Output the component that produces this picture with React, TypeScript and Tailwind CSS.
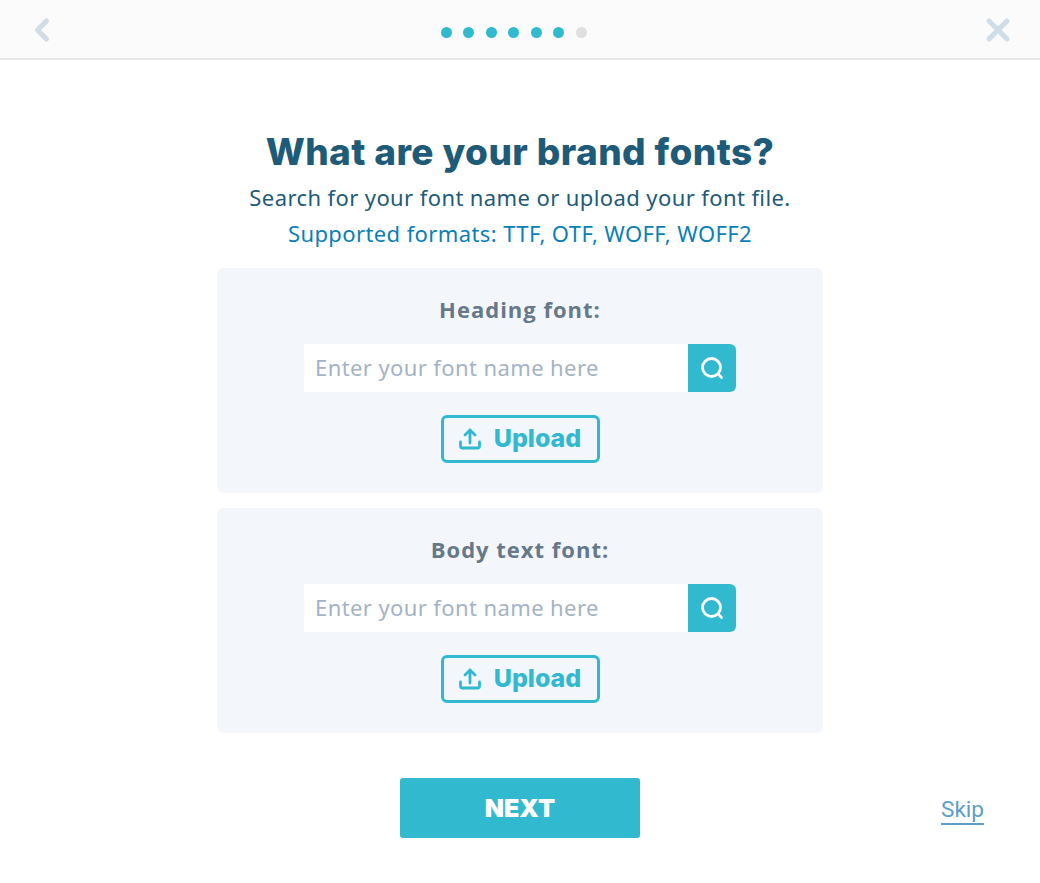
import { ChevronLeft, X } from "lucide-react";

const dots = [1, 2, 3, 4, 5, 6, 7];

function UploadIcon() {
  return (
    <svg width="22" height="22" viewBox="0 0 22 22" fill="none" stroke="#31bacf" strokeWidth="2.8" strokeLinecap="round" strokeLinejoin="round">
      <path d="M1.5 14v4a2 2 0 0 0 2 2h15a2 2 0 0 0 2-2v-4" />
      <path d="M11 15V2M6 7l5-5 5 5" />
    </svg>
  );
}

function SearchIcon() {
  return (
    <svg width="24" height="24" viewBox="0 0 24 24" fill="none" stroke="#ffffff" strokeWidth="2.8" strokeLinecap="round">
      <circle cx="11.5" cy="11.5" r="9" />
      <path d="M18.5 18.5l3 3" />
    </svg>
  );
}

function FontPanel({ label }: { label: string }) {
  return (
    <div className="flex h-[225px] w-[606px] flex-col items-center rounded-md bg-[#f3f6fa] pt-[27px]">
      <div className="h-[28px] font-['Open_Sans',sans-serif] text-[22px] leading-[28px] font-bold tracking-[1px] text-[#66788a]">
        {label}
      </div>
      <div className="mt-[21px] flex h-[48px] w-[432px]">
        <div className="flex w-[384px] items-center bg-white pb-[1px] pl-[11px] font-['Noto_Sans',sans-serif] text-[22px] tracking-[0.4px] text-[#a3b3c5]">
          Enter your font name here
        </div>
        <div className="flex w-[48px] items-center justify-center rounded-r-md bg-[#31bacf]">
          <SearchIcon />
        </div>
      </div>
      <div className="mt-[23px] flex h-[48px] w-[159px] items-center justify-center gap-[13px] rounded-md border-[3px] border-[#31bacf]">
        <UploadIcon />
        <span className="font-['Inter',sans-serif] text-[25px] font-extrabold text-[#31bacf]">Upload</span>
      </div>
    </div>
  );
}

export default function App() {
  return (
    <div className="flex min-h-[883px] w-[1040px] flex-col bg-white">
      <header className="flex h-[60px] items-center justify-between border-b-2 border-[#e6e6e6] bg-[#fbfbfb] px-[24px] pt-[2px]">
        <ChevronLeft size={36} strokeWidth={3.4} color="#cfdde9" />
        <div className="mt-[5px] mr-[13px] flex gap-[11.5px]">
          {dots.map((d) => (
            <span key={d} className={d === 7 ? "h-[11px] w-[11px] rounded-full bg-[#dfdfdf]" : "h-[11px] w-[11px] rounded-full bg-[#31bacf]"} />
          ))}
        </div>
        <X size={36} strokeWidth={3.4} color="#cfdde9" />
      </header>

      <main className="flex flex-col items-center">
        <h1 className="mt-[69px] h-[46px] font-['Inter',sans-serif] text-[37px] leading-[46px] font-extrabold tracking-[0.4px] text-[#1e5b78]">
          What are your brand fonts?
        </h1>
        <p className="mt-[6px] font-['Noto_Sans',sans-serif] text-[22px] leading-[32px] tracking-[0.4px] text-[#1e5b78]">
          Search for your font name or upload your font file.
        </p>
        <p className="mt-[4px] font-['Noto_Sans',sans-serif] text-[22px] leading-[32px] tracking-[0.4px] text-[#0a7fb5]">
          Supported formats: TTF, OTF, WOFF, WOFF2
        </p>
        <div className="mt-[19px] flex flex-col gap-[15px]">
          <FontPanel label="Heading font:" />
          <FontPanel label="Body text font:" />
        </div>
        <div className="relative mt-[45px] flex w-full justify-center">
          <button className="h-[60px] w-[240px] rounded-[3px] bg-[#31bacf] pt-[1px] font-['Inter',sans-serif] text-[25px] font-black text-white">
            NEXT
          </button>
          <a className="absolute top-[18px] left-[941px] border-b-2 border-[#5c9dc7] font-['Roboto',sans-serif] text-[22.6px] leading-[27px] text-[#5c9dc7]">
            Skip
          </a>
        </div>
      </main>
    </div>
  );
}
